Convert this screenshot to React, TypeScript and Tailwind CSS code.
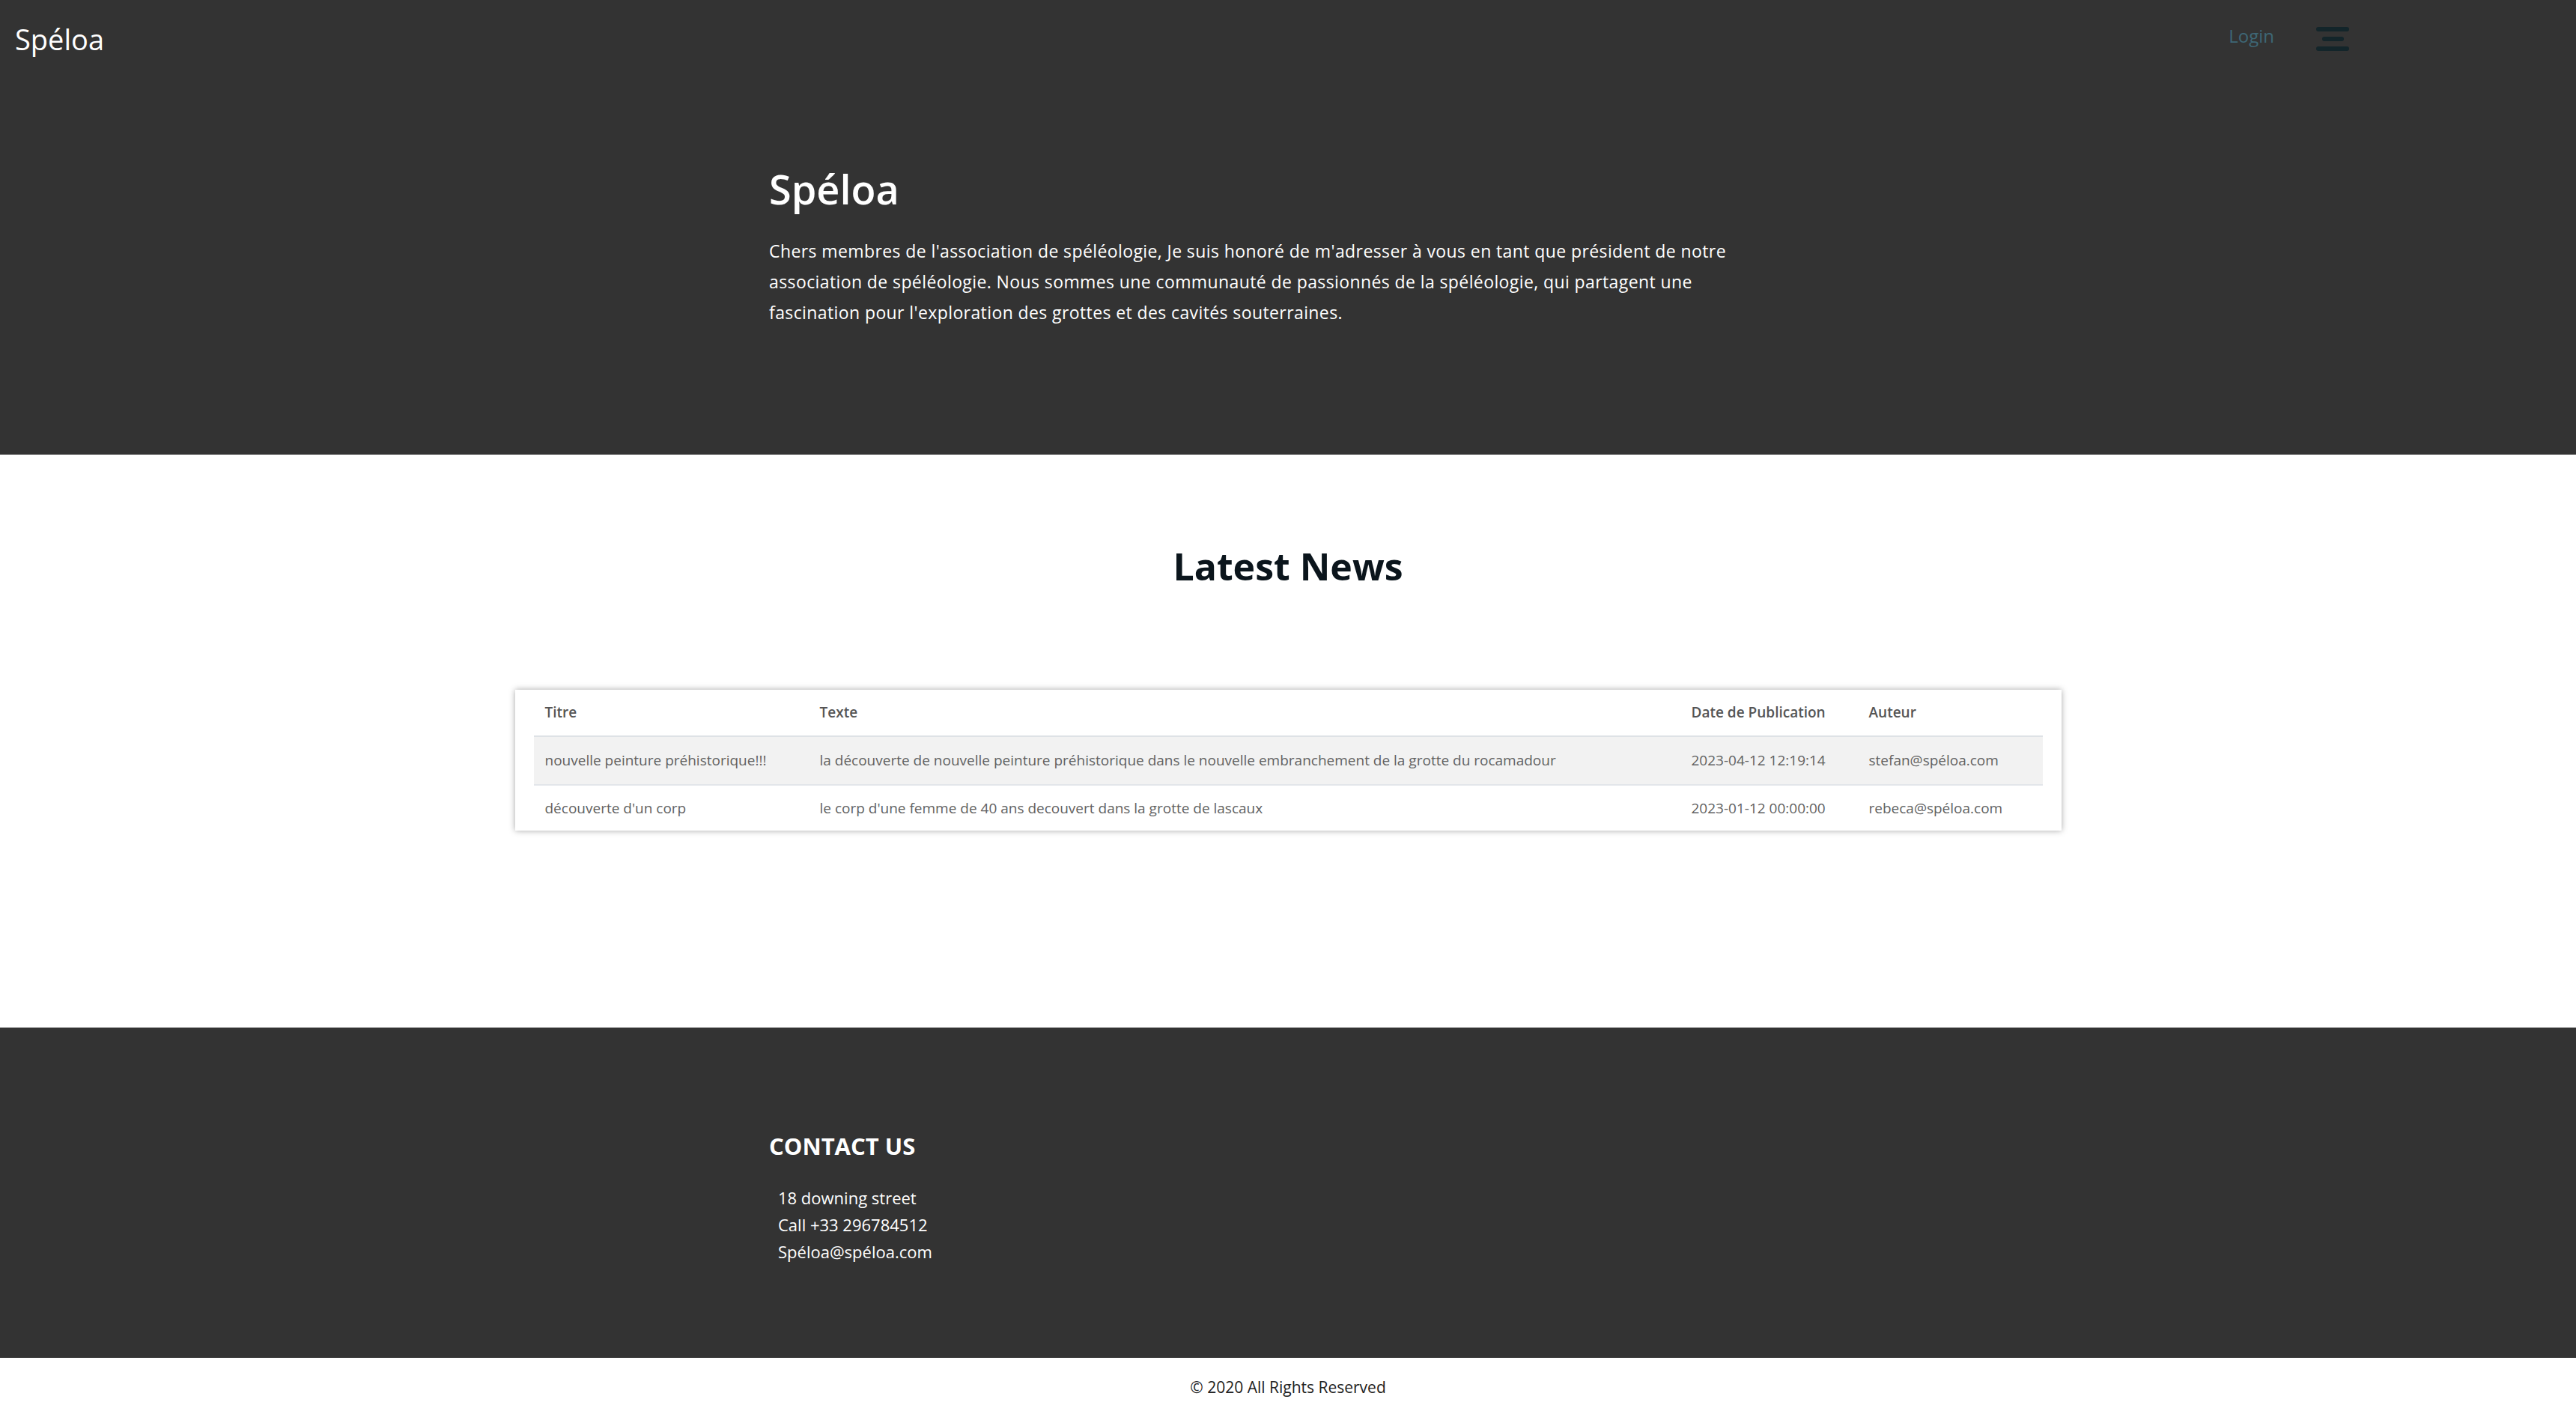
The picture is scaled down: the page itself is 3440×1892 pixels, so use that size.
import React from 'react'

const news = [
  {
    titre: 'nouvelle peinture préhistorique!!!',
    texte: 'la découverte de nouvelle peinture préhistorique dans le nouvelle embranchement de la grotte du rocamadour',
    date: '2023-04-12 12:19:14',
    auteur: 'stefan@spéloa.com',
  },
  {
    titre: "découverte d'un corp",
    texte: "le corp d'une femme de 40 ans decouvert dans la grotte de lascaux",
    date: '2023-01-12 00:00:00',
    auteur: 'rebeca@spéloa.com',
  },
]

const App = () => {
  return (
    <div className="min-h-screen bg-white font-['Open_Sans',sans-serif]">
      {/* hero */}
      <section className="bg-[#333333] text-white">
        <nav className="flex h-[104px] items-center justify-between pl-[20px] pr-[303px]">
          <a href="/" className="text-[38px] font-normal leading-none text-white">Spéloa</a>
          <div className="-mt-[8px] flex items-center gap-[56px]">
            <a href="#" className="text-[24px] text-[#3e6776]">Login</a>
            <button className="mt-[8px] flex w-[44px] flex-col items-center gap-[7px]">
              <span className="block h-[6px] w-[44px] rounded-full bg-[#13252a]" />
              <span className="block h-[6px] w-[29px] rounded-full bg-[#13252a]" />
              <span className="block h-[6px] w-[44px] rounded-full bg-[#13252a]" />
            </button>
          </div>
        </nav>
        <div className="mx-auto w-[1386px] pt-[117px] pb-[169px]">
          <h1 className="text-[54px] font-semibold leading-[62px]">Spéloa</h1>
          <p className="mt-[32px] max-w-[1330px] text-[23px] leading-[41px] tracking-[0.4px]">
            Chers membres de l'association de spéléologie, Je suis honoré de m'adresser à vous en tant que président de notre association de spéléologie. Nous sommes une communauté de passionnés de la spéléologie, qui partagent une fascination pour l'exploration des grottes et des cavités souterraines.
          </p>
        </div>
      </section>

      {/* news */}
      <section className="pt-[119px] pb-[263px]">
        <h2 className="text-center text-[50px] font-bold leading-[60px] text-[#0b151c]">Latest News</h2>
        <div className="mx-auto mt-[135px] w-[2065px] bg-white px-[25px] shadow-[0_0_8px_rgba(0,0,0,0.35)]">
          <table className="w-full table-fixed border-collapse text-left text-[19px] text-[#626262]">
            <colgroup>
              <col className="w-[367px]" />
              <col />
              <col className="w-[237px]" />
              <col className="w-[247px]" />
            </colgroup>
            <thead>
              <tr className="h-[62px] border-b-2 border-[#dee2e6]">
                <th className="px-[15px] font-semibold text-[#555555]">Titre</th>
                <th className="px-[15px] font-semibold text-[#555555]">Texte</th>
                <th className="px-[15px] font-semibold text-[#555555]">Date de Publication</th>
                <th className="px-[15px] font-semibold text-[#555555]">Auteur</th>
              </tr>
            </thead>
            <tbody>
              {news.map((n, i) => (
                <tr key={i} className={i === 0 ? 'h-[65px] border-b-2 border-[#e3e6ea] bg-[#f2f2f2]' : 'h-[61px]'}>
                  <td className="px-[15px]">{n.titre}</td>
                  <td className="px-[15px]">{n.texte}</td>
                  <td className="px-[15px]">{n.date}</td>
                  <td className="px-[15px]">{n.auteur}</td>
                </tr>
              ))}
            </tbody>
          </table>
        </div>
      </section>

      {/* footer */}
      <footer>
        <div className="bg-[#333333] text-white">
          <div className="mx-auto w-[1386px] pt-[140px] pb-[124px]">
            <h3 className="text-[31px] font-bold leading-[36px]">CONTACT US</h3>
            <ul className="mt-[33px] pl-[12px] text-[22px] leading-[36px]">
              <li>18 downing street</li>
              <li>Call +33 296784512</li>
              <li>Spéloa@spéloa.com</li>
            </ul>
          </div>
        </div>
        <div className="flex h-[79px] items-center justify-center text-[21px] text-[#222222]">
          © 2020 All Rights Reserved
        </div>
      </footer>
    </div>
  )
}

export default App
